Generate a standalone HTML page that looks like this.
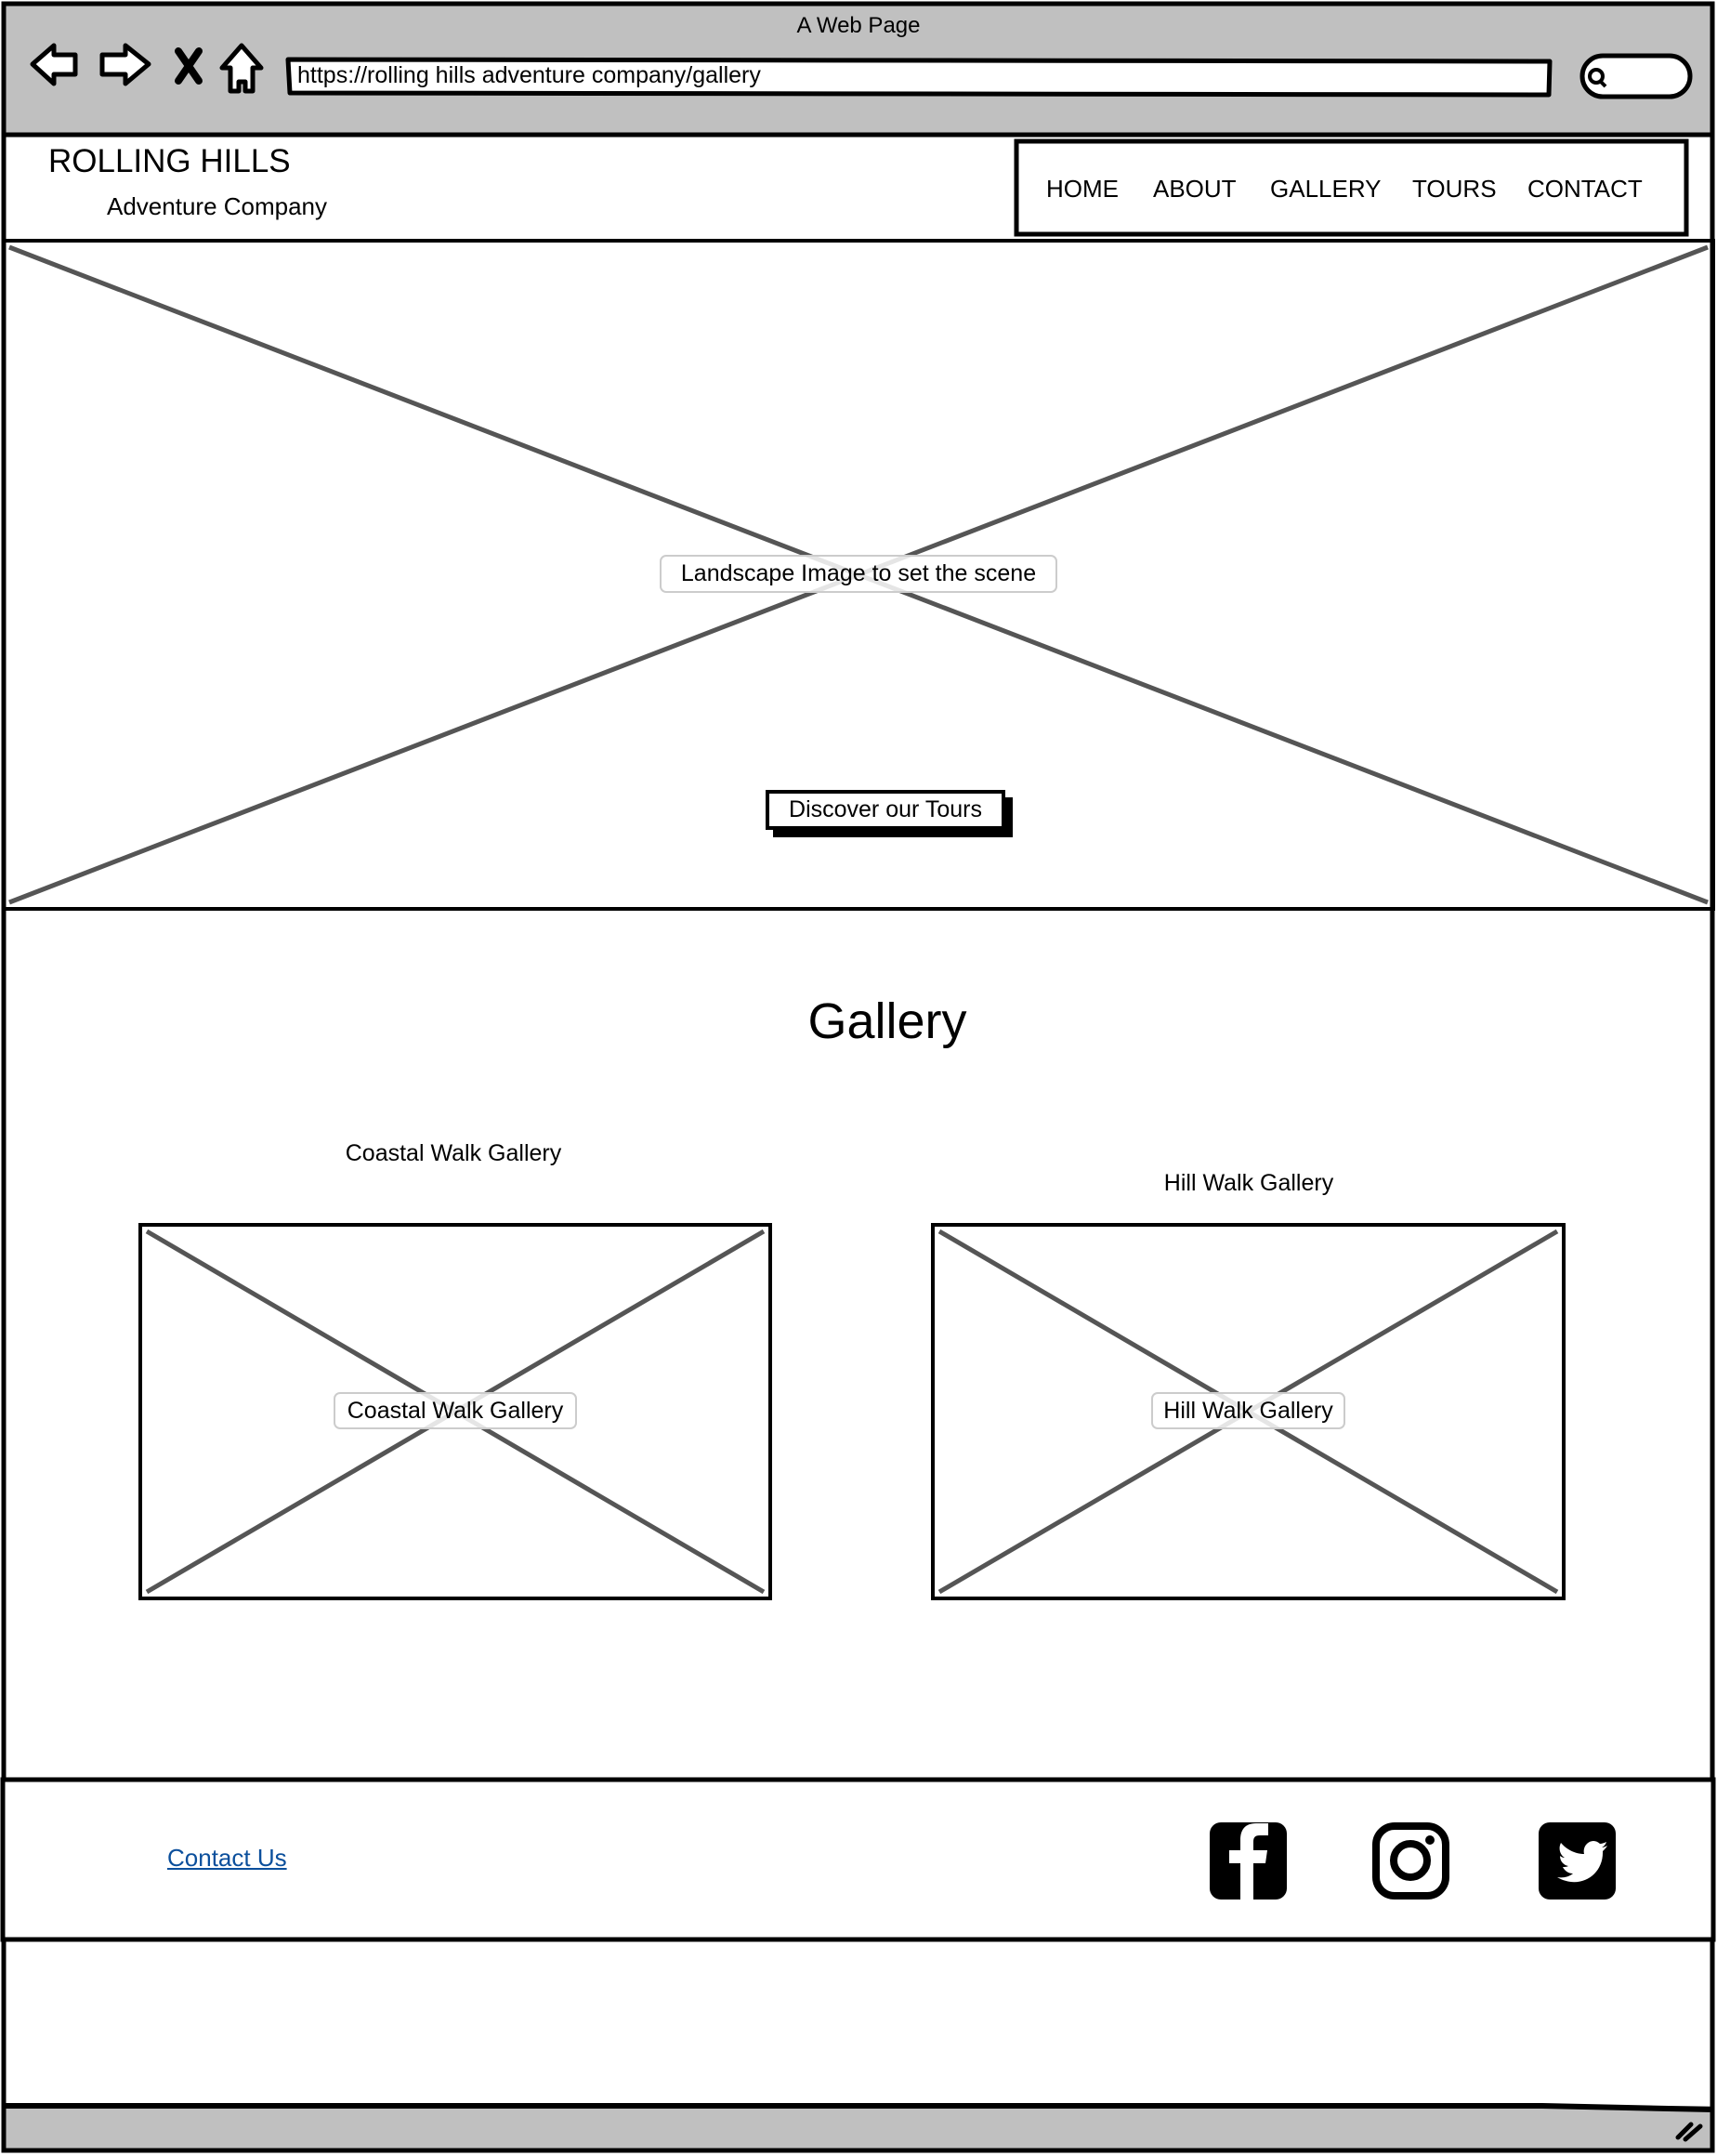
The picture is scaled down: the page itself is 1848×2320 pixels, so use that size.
<!DOCTYPE html>
<html><head><meta charset="utf-8"><style>
*{margin:0;padding:0;box-sizing:border-box}
body{width:1848px;height:2320px;background:#fff;position:relative;overflow:hidden;font-family:"Liberation Sans",sans-serif;color:#000}
.a{position:absolute;white-space:nowrap}
</style></head><body>
<svg class="a" style="left:0;top:0" width="1848" height="2320" viewBox="0 0 1848 2320">
<!-- top bar -->
<rect x="3" y="3" width="1840" height="142" fill="#c0c0c0"/>
<rect x="3" y="2266" width="1840" height="48" fill="#c0c0c0"/>
<!-- outer frame -->
<path d="M4 4 H1843 V2314 H4 Z" fill="none" stroke="#000" stroke-width="5"/>
<path d="M4 145 H1843" stroke="#000" stroke-width="5"/>
<path d="M4 2266 H1660 L1843 2270" stroke="#000" stroke-width="6" fill="none"/>
<!-- address bar -->
<path d="M310 64 L1668 66 L1667 102 L312 100 Z" fill="#fff" stroke="#000" stroke-width="5" stroke-linejoin="round"/>
<!-- search pill -->
<rect x="1703" y="60" width="116" height="44" rx="22" fill="#fff" stroke="#000" stroke-width="5"/>
<circle cx="1718" cy="82" r="7" fill="none" stroke="#000" stroke-width="4"/>
<path d="M1722 87 L1728 93" stroke="#000" stroke-width="4"/>
<!-- back arrow -->
<path d="M35 69 L58 49 L58 59 L81 59 L81 80 L58 80 L58 90 Z" fill="#fff" stroke="#000" stroke-width="5" stroke-linejoin="round"/>
<path d="M160 69 L135 49 L135 59 L110 59 L110 80 L135 80 L135 90 Z" fill="#fff" stroke="#000" stroke-width="5" stroke-linejoin="round"/>
<path d="M192 55 L214 87 M214 55 L192 87" stroke="#000" stroke-width="8" stroke-linecap="round"/>
<path d="M260 49 L281 73 L272 73 L272 98 L264 98 L264 88 L257 88 L257 98 L248 98 L248 73 L239 73 Z" fill="#fff" stroke="#000" stroke-width="5" stroke-linejoin="round"/>
<!-- nav box -->
<rect x="1094" y="152" width="721" height="100" fill="none" stroke="#000" stroke-width="5"/>
<!-- hero -->
<rect x="4" y="259" width="1840" height="719" fill="none" stroke="#000" stroke-width="4"/>
<path d="M10 266 L1838 971 M1838 266 L10 971" stroke="#555" stroke-width="5"/>
<!-- gallery boxes -->
<rect x="151" y="1318" width="678" height="402" fill="none" stroke="#000" stroke-width="4"/>
<path d="M158 1325 L822 1713 M822 1325 L158 1713" stroke="#555" stroke-width="5"/>
<rect x="1004" y="1318" width="679" height="402" fill="none" stroke="#000" stroke-width="4"/>
<path d="M1011 1325 L1676 1713 M1676 1325 L1011 1713" stroke="#555" stroke-width="5"/>
<!-- footer -->
<rect x="3" y="1915" width="1841" height="172" fill="#fff" stroke="#000" stroke-width="5"/>
<!-- resize grip -->
<path d="M1806 2300 L1820 2286 M1814 2302 L1830 2288" stroke="#000" stroke-width="5" stroke-linecap="round"/>
<!-- facebook -->
<rect x="1302" y="1961" width="83" height="83" rx="12" fill="#000"/>
<path d="M1349 2044 V2005 H1362 L1364 1991 H1349 V1982 C1349 1977 1351 1975 1356 1975 H1365 V1962 H1352 C1340 1962 1335 1969 1335 1980 V1991 H1323 V2005 H1335 V2044 Z" fill="#fff"/>
<!-- instagram -->
<rect x="1481" y="1965" width="75" height="75" rx="20" fill="none" stroke="#000" stroke-width="8"/>
<circle cx="1518" cy="2002" r="18" fill="none" stroke="#000" stroke-width="8"/>
<circle cx="1539" cy="1980" r="5" fill="#000"/>
<!-- twitter -->
<rect x="1656" y="1961" width="83" height="83" rx="12" fill="#000"/>
<path d="M1722 1984 C1718 1980 1712 1980 1708 1984 C1705 1987 1704 1991 1705 1995 C1695 1995 1686 1990 1680 1983 C1677 1989 1679 1996 1684 1999 C1682 1999 1680 1998 1679 1997 C1679 2003 1683 2007 1688 2008 C1686 2009 1684 2009 1682 2009 C1684 2013 1688 2016 1693 2016 C1688 2020 1682 2021 1676 2020 C1700 2034 1726 2018 1725 1992 C1727 1990 1729 1988 1730 1986 C1728 1987 1726 1988 1724 1988 C1726 1987 1728 1985 1729 1982 C1727 1983 1724 1984 1722 1984 Z" fill="#fff"/>
</svg>

<div class="a" style="left:0;width:1848px;text-align:center;top:14px;font-size:24px">A Web Page</div>
<div class="a" style="left:320px;top:67px;font-size:25px">https://rolling hills adventure company/gallery</div>

<div class="a" style="left:52px;top:154px;font-size:35px">ROLLING HILLS</div>
<div class="a" style="left:115px;top:207px;font-size:26px">Adventure Company</div>

<div class="a" style="left:1126px;top:188px;font-size:26px">HOME</div>
<div class="a" style="left:1241px;top:188px;font-size:26px">ABOUT</div>
<div class="a" style="left:1367px;top:188px;font-size:26px">GALLERY</div>
<div class="a" style="left:1520px;top:188px;font-size:26px">TOURS</div>
<div class="a" style="left:1644px;top:188px;font-size:26px">CONTACT</div>

<div class="a" style="left:710px;top:597px;width:428px;height:41px;border:2px solid #ccc;border-radius:7px;background:rgba(255,255,255,0.85);text-align:center;font-size:25px;line-height:37px">Landscape Image to set the scene</div>

<div class="a" style="left:832px;top:858px;width:258px;height:43px;background:#000"></div>
<div class="a" style="left:824px;top:850px;width:258px;height:43px;border:4px solid #000;background:#fff;text-align:center;font-size:25px;line-height:35px">Discover our Tours</div>

<div class="a" style="left:0;width:1910px;text-align:center;top:1068px;font-size:54px">Gallery</div>

<div class="a" style="left:288px;width:400px;text-align:center;top:1227px;font-size:25px">Coastal Walk Gallery</div>
<div class="a" style="left:1144px;width:400px;text-align:center;top:1259px;font-size:25px">Hill Walk Gallery</div>

<div class="a" style="left:359px;top:1498px;width:262px;height:40px;border:2px solid #ccc;border-radius:7px;background:rgba(255,255,255,0.85);text-align:center;font-size:25px;line-height:36px">Coastal Walk Gallery</div>
<div class="a" style="left:1239px;top:1498px;width:209px;height:40px;border:2px solid #ccc;border-radius:7px;background:rgba(255,255,255,0.85);text-align:center;font-size:25px;line-height:36px">Hill Walk Gallery</div>

<div class="a" style="left:180px;top:1984px;font-size:26px;color:#0b4f9c;text-decoration:underline">Contact Us</div>
</body></html>
